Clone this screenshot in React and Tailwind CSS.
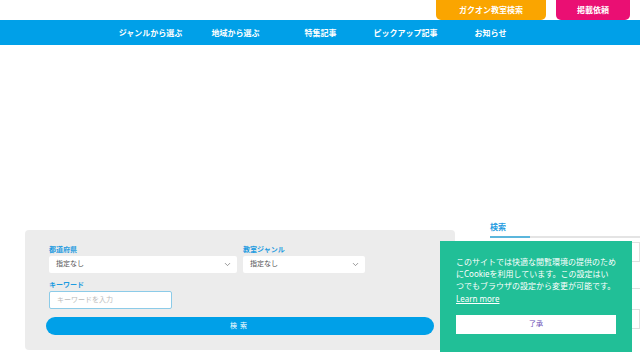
import { ChevronDown } from "lucide-react";

const font = { fontFamily: '"Noto Sans", "Noto Sans CJK JP", sans-serif' };

const navItems = [
  { label: "ジャンルから選ぶ", w: "w-[85px]" },
  { label: "地域から選ぶ", w: "w-[85px]" },
  { label: "特集記事", w: "w-[85px]" },
  { label: "ピックアップ記事", w: "w-[85px]" },
  { label: "お知らせ", w: "w-[85px]" },
];

function Select({ className }) {
  return (
    <div className={`flex h-[17px] items-center justify-between rounded-[2px] bg-white pl-[7px] pr-[5px] text-[7px] text-[#555] ${className}`}>
      <span>指定なし</span>
      <ChevronDown className="h-[9px] w-[9px] text-[#777]" strokeWidth={2} />
    </div>
  );
}

export default function App() {
  return (
    <div className="relative h-[360px] w-[640px] overflow-hidden bg-white" style={font}>
      <header className="flex h-[20px] justify-end gap-[10px] pr-[10px]">
        <a className="flex w-[110px] items-center justify-center rounded-b-[5px] bg-[#faa500] text-[8px] font-bold text-white">
          ガクオン教室検索
        </a>
        <a className="flex w-[74px] items-center justify-center rounded-b-[5px] bg-[#ea0f73] text-[8px] font-bold text-white">
          掲載依頼
        </a>
      </header>
      <nav className="flex h-[25px] items-center bg-[#00a0e8] pl-[108px]">
        {navItems.map((n) => (
          <div key={n.label} className={`${n.w} text-center text-[8px] font-bold text-white`}>
            {n.label}
          </div>
        ))}
      </nav>

      <div className="mt-[185px] flex items-start">
        <section className="ml-[25px] w-[430px] rounded-[4px] bg-[#ececec] px-[21px] pb-[15px] pt-[15px]">
          <div className="flex gap-[6px] pl-[3px]">
            <div className="w-[188px]">
              <div className="text-[7px] font-bold leading-[10px] text-[#1e9be0]">都道府県</div>
              <Select className="mt-[1px]" />
            </div>
            <div className="w-[122px]">
              <div className="text-[7px] font-bold leading-[10px] text-[#1e9be0]">教室ジャンル</div>
              <Select className="mt-[1px]" />
            </div>
          </div>
          <div className="mt-[7px] pl-[3px]">
            <div className="text-[7px] font-bold leading-[10px] text-[#1e9be0]">キーワード</div>
            <div className="mt-[1px] flex h-[18px] w-[123px] items-center rounded-[2px] border border-[#8ccbe8] bg-white pl-[7px] text-[7px] text-[#bbb]">
              キーワードを入力
            </div>
          </div>
          <button className="mt-[8px] flex h-[18px] w-[388px] items-center justify-center rounded-full bg-[#00a0e8] text-[7px] tracking-[3px] text-white">
            検索
          </button>
        </section>

        <aside className="ml-[35px] mt-[-9px] flex-1">
          <div className="pb-[3px] text-[8px] font-bold leading-[12px] text-[#1e9be0]">検索</div>
          <div className="flex h-[2px]">
            <div className="w-[40px] bg-[#5bb6dc]" />
            <div className="flex-1 bg-[#e4e4e4]" />
          </div>
          <div className="mt-[4px] h-[20px] border border-[#e0e0e0]" />
          <div className="mt-[26px] h-[1px] bg-[#e0e0e0]" />
          <div className="ml-[110px] mt-[20px] h-[20px] border border-[#e0e0e0]" />
        </aside>
      </div>

      <div className="absolute left-[440px] top-[241px] h-[111px] w-[192px] bg-[#21bf97] px-[16px] pt-[15px]">
        <p className="text-[8px] leading-[12px] text-white">
          このサイトでは快適な閲覧環境の提供のためにCookieを利用しています。この設定はいつでもブラウザの設定から変更が可能です。
        </p>
        <a className="mt-[1px] block text-[8px] leading-[12px] text-white underline">Learn more</a>
        <button className="mt-[10px] flex h-[19px] w-[160px] items-center justify-center bg-white text-[7px] text-[#6b4fb5]">
          了承
        </button>
      </div>
    </div>
  );
}
